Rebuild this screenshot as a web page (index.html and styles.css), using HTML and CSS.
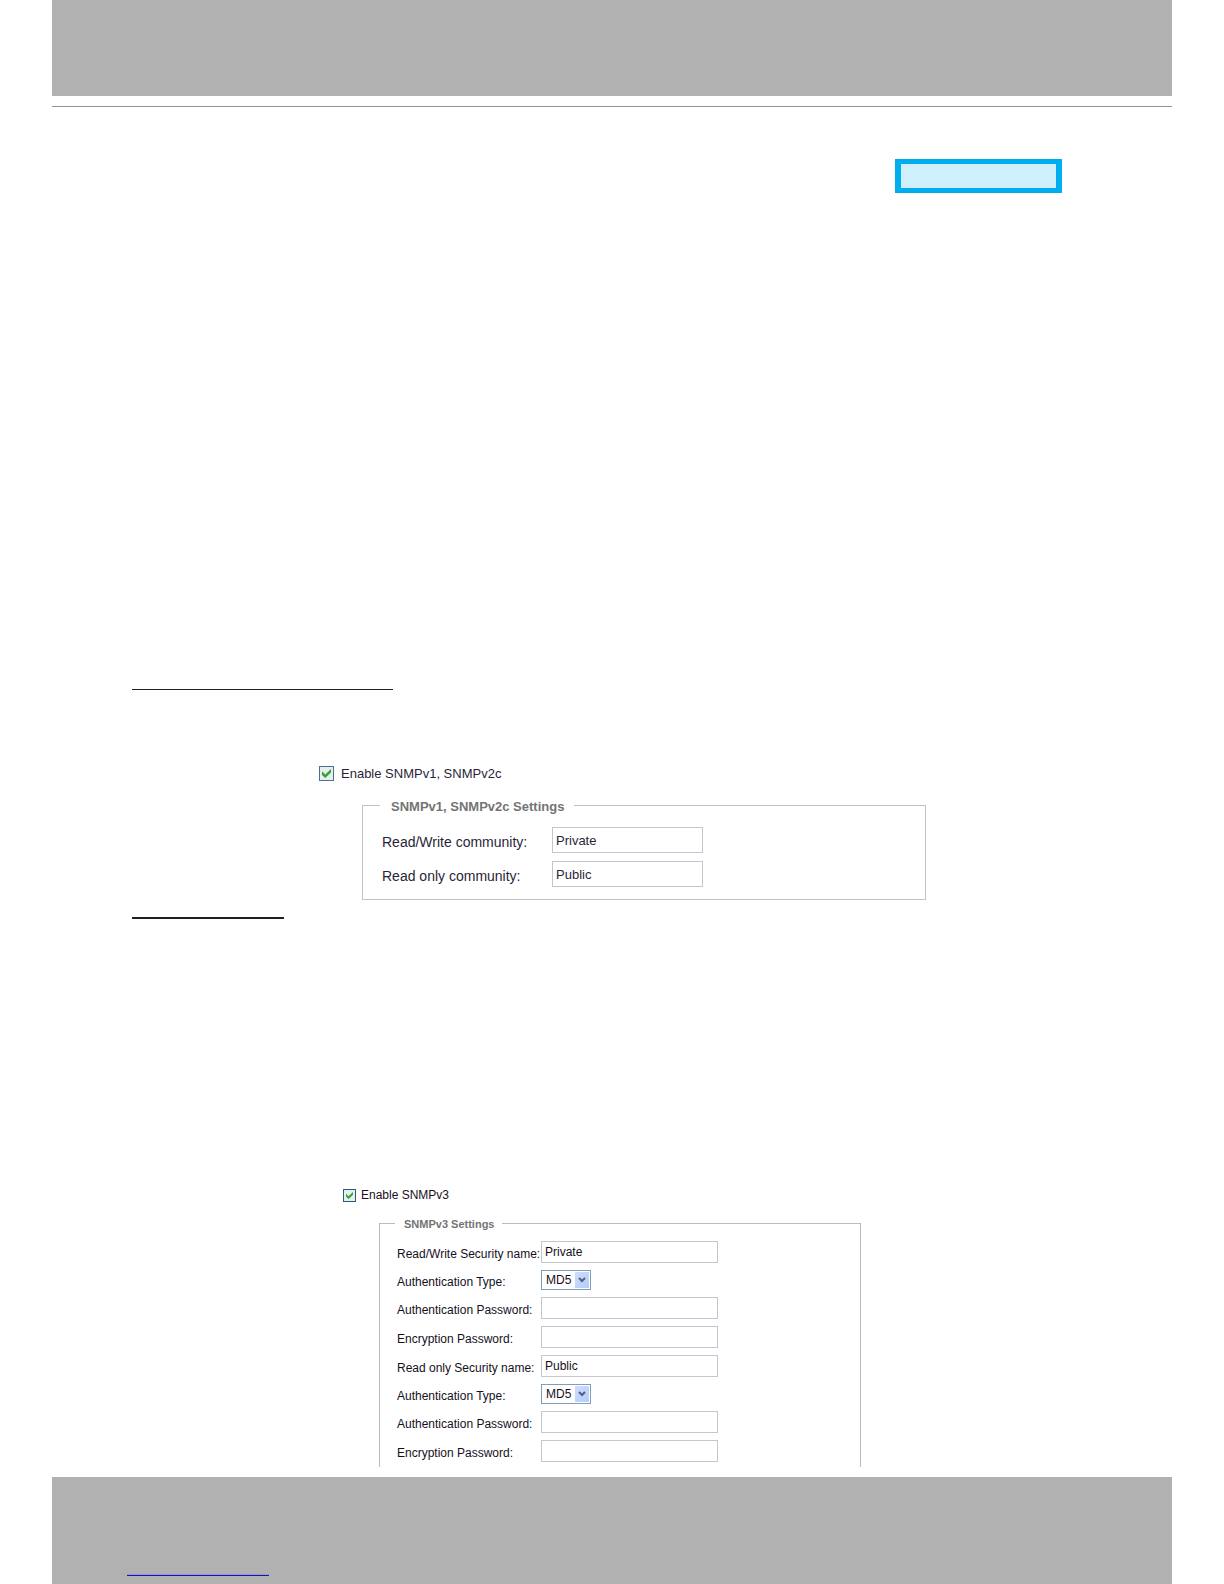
FILE: index.html
```html
<!DOCTYPE html>
<html lang="en">
<head>
  <meta charset="UTF-8" />
  <title>SNMP Settings</title>
  <meta name="viewport" content="width=device-width, initial-scale=1.0" />
  <link rel="stylesheet" href="styles.css">
</head>
<body>

<header class="bar"></header>

<main>
  <div class="mode-box"></div>
  <hr class="rule rule-v1">

  <form class="settings v1">
    <label class="enable"><input type="checkbox" class="check" checked> Enable SNMPv1, SNMPv2c</label>
    <fieldset>
      <legend>SNMPv1, SNMPv2c Settings</legend>
      <div class="rows">
        <label for="rwCommunity">Read/Write community:</label>
        <input type="text" id="rwCommunity" value="Private">
        <label for="roCommunity">Read only community:</label>
        <input type="text" id="roCommunity" value="Public">
      </div>
    </fieldset>
  </form>

  <hr class="rule rule-v3">

  <form class="settings v3">
    <label class="enable"><input type="checkbox" class="check" checked> Enable SNMPv3</label>
    <fieldset>
      <legend>SNMPv3 Settings</legend>
      <div class="rows">
        <label for="rwName">Read/Write Security name:</label>
        <input type="text" id="rwName" value="Private">
        <label for="rwAuth">Authentication Type:</label>
        <div class="select">
          <select id="rwAuth"><option>MD5</option><option>SHA</option></select>
          <svg class="arrow" viewBox="0 0 14 16"><path d="M4 6l3 3 3-3" /></svg>
        </div>
        <label for="rwAuthPass">Authentication Password:</label>
        <input type="password" id="rwAuthPass">
        <label for="rwEncPass">Encryption Password:</label>
        <input type="password" id="rwEncPass">
        <label for="roName">Read only Security name:</label>
        <input type="text" id="roName" value="Public">
        <label for="roAuth">Authentication Type:</label>
        <div class="select">
          <select id="roAuth"><option>MD5</option><option>SHA</option></select>
          <svg class="arrow" viewBox="0 0 14 16"><path d="M4 6l3 3 3-3" /></svg>
        </div>
        <label for="roAuthPass">Authentication Password:</label>
        <input type="password" id="roAuthPass">
        <label for="roEncPass">Encryption Password:</label>
        <input type="password" id="roEncPass">
      </div>
    </fieldset>
  </form>
</main>

<footer>
  <a href="#" class="footer-link" aria-label="Home"></a>
</footer>

</body>
</html>
```
FILE: styles.css
```css
* {
  box-sizing: border-box;
}
body {
  margin: 0;
  padding: 0 52px;
  font-family: "Liberation Sans", Arial, sans-serif;
  font-size: 13px;
  background: #fff;
  color: #2b1f38;
}
.bar {
  height: 96px;
  background: #b1b1b1;
}
main {
  display: flow-root;
  margin-top: 10px;
  padding: 0 80px;
  border-top: 1px solid #939393;
}
.mode-box {
  width: 167px;
  height: 34px;
  margin: 52px 30px 0 auto;
  border: solid #00aeef;
  border-width: 5px 6px;
  background: #cfefff;
}
.rule {
  margin: 0;
  border: 0;
  background: #231f20;
}
.rule-v1 {
  width: 261px;
  height: 1px;
  margin-top: 496px;
}
.rule-v3 {
  width: 152px;
  height: 2px;
  margin-top: 17px;
}

/* settings forms */
.settings fieldset {
  margin: 0;
  min-width: 0;
  border: 1px solid #c3c3bd;
}
.settings legend {
  font-weight: bold;
  color: #747474;
}
.enable {
  display: flex;
  align-items: center;
}
.rows {
  display: grid;
  justify-items: start;
  align-items: center;
  padding-left: 2px;
}
.rows label {
  padding-top: 4px;
  line-height: 16px;
  white-space: nowrap;
}
.rows input {
  margin: 0;
  padding: 0 3px;
  border: 1px solid #c2c7cf;
  background: #fff;
  font: inherit;
  color: inherit;
}
.check {
  appearance: none;
  position: relative;
  flex: none;
  margin: 0;
  border: 1px solid #4a709a;
  background: #e6efec;
}
.check:checked::before {
  content: "";
  position: absolute;
  inset: 2px;
  background: #2fa336;
  clip-path: polygon(0 26%, 36% 60%, 100% 0, 100% 38%, 36% 100%, 0 66%);
}

.v1 {
  max-width: 607px;
  margin: 76px 0 0 187px;
}
.v1 .enable {
  gap: 7px;
  line-height: 15px;
}
.v1 .check {
  width: 15px;
  height: 15px;
}
.v1 fieldset {
  margin: 14px 0 0 43px;
  padding: 12px 17px 12px;
}
.v1 legend {
  padding: 4px 10px 0 11px;
  line-height: 16px;
}
.v1 .rows {
  grid-template-columns: 170px 1fr;
  row-gap: 8px;
}
.v1 .rows label {
  font-size: 14px;
}
.v1 .rows input {
  width: 151px;
  height: 26px;
}

.v3 {
  max-width: 518px;
  margin: 270px 0 0 211px;
  font-size: 12px;
  color: #16101c;
}
.v3 .enable {
  gap: 5px;
  line-height: 13px;
}
.v3 .check {
  width: 13px;
  height: 13px;
  border-color: #2c5a7d;
}
.v3 fieldset {
  margin: 12px 0 0 36px;
  padding: 9px 15px 5px;
  border-color: #bcbcbc;
  border-bottom: 0;
}
.v3 legend {
  padding: 2px 8px 0 9px;
  font-size: 11px;
  line-height: 16px;
}
.v3 .rows {
  grid-template-columns: 144px 1fr;
  row-gap: 7px;
}
.v3 .rows input {
  width: 177px;
  height: 22px;
}
.select {
  position: relative;
  width: 50px;
  height: 20px;
}
.select select {
  appearance: none;
  display: block;
  width: 100%;
  height: 100%;
  margin: 0;
  padding: 0 0 0 4px;
  border: 1px solid #7f9db9;
  border-radius: 0;
  background: #fff;
  font: inherit;
  color: inherit;
}
.arrow {
  position: absolute;
  top: 2px;
  right: 2px;
  width: 14px;
  height: 16px;
  background: linear-gradient(135deg, #cfdcfb, #b4cdf8);
  fill: none;
  stroke: #4d6185;
  stroke-width: 2;
  pointer-events: none;
}

footer {
  margin-top: 10px;
  padding: 97px 75px 8px;
  background: #b1b1b1;
}
.footer-link {
  display: block;
  width: 142px;
  border-top: 1px solid #9292f0;
  border-bottom: 1px solid #1a1a98;
}
```
